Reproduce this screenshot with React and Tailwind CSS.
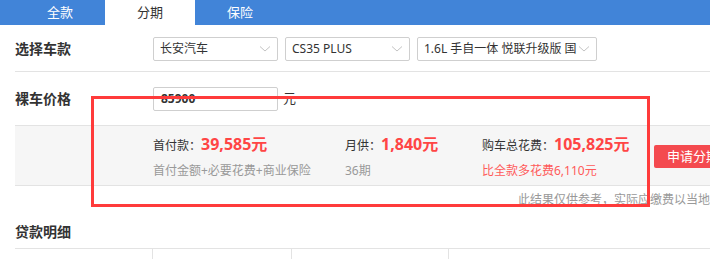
import React from "react";

const font = { fontFamily: '"Noto Sans", "Noto Sans CJK SC", sans-serif' };

function Chevron() {
  return (
    <svg width="12" height="8" viewBox="0 0 12 8" className="shrink-0">
      <path d="M1 1.5 L6 6 L11 1.5" fill="none" stroke="#c4c4c4" strokeWidth="1" />
    </svg>
  );
}

function Select({ w, text }) {
  return (
    <div
      className="h-[24px] border border-[#cfcfcf] rounded-[2px] bg-white flex items-center justify-between pl-[6px] pr-[6px] text-[12px] text-[#333] overflow-hidden whitespace-nowrap"
      style={{ width: w }}
    >
      <span className="overflow-hidden">{text}</span>
      <Chevron />
    </div>
  );
}

export default function App() {
  return (
    <div className="relative w-[710px] h-[259px] overflow-hidden bg-white" style={font}>
      {/* tabs */}
      <div className="h-[25px] bg-[#4184d8] flex pl-[15px]">
        <div className="w-[90px] flex items-center justify-center text-[13px] text-white">全款</div>
        <div className="w-[90px] flex items-center justify-center text-[13px] text-[#333] bg-white">分期</div>
        <div className="w-[90px] flex items-center justify-center text-[13px] text-white">保险</div>
      </div>

      <div className="pl-[15px] w-[900px]">
        {/* row 1 */}
        <div className="h-[47px] flex items-center border-b border-[#e3e3e3]">
          <div className="w-[138px] text-[14px] font-bold text-[#333]">选择车款</div>
          <div className="flex gap-[7px] mt-[1px]">
            <Select w="125px" text="长安汽车" />
            <Select w="125px" text="CS35 PLUS" />
            <Select w="180px" text="1.6L 手自一体 悦联升级版 国" />
          </div>
        </div>
        {/* row 2 */}
        <div className="h-[53px] flex items-center">
          <div className="w-[138px] text-[14px] font-bold text-[#333]">裸车价格</div>
          <div className="w-[125px] h-[24px] border border-[#cfcfcf] rounded-[2px] flex items-center pl-[7px] text-[12px] font-bold text-[#333]">
            85900
          </div>
          <div className="ml-[5px] text-[13px] text-[#333]">元</div>
        </div>
        {/* band */}
        <div className="h-[61px] bg-[#f6f6f6] border-y border-[#e3e3e3] flex items-center">
          <div className="w-[138px]" />
          <div className="w-[192px] flex flex-col gap-[6px]">
            <div className="flex items-baseline text-[12px] text-[#333]">
              首付款：<span className="text-[16px] font-bold text-[#ff4545]">39,585元</span>
            </div>
            <div className="text-[12px] text-[#999]">首付金额+必要花费+商业保险</div>
          </div>
          <div className="w-[137px] flex flex-col gap-[6px]">
            <div className="flex items-baseline text-[12px] text-[#333]">
              月供：<span className="text-[16px] font-bold text-[#ff4545]">1,840元</span>
            </div>
            <div className="text-[12px] text-[#999]">36期</div>
          </div>
          <div className="w-[172px] flex flex-col gap-[6px]">
            <div className="flex items-baseline text-[12px] text-[#333]">
              购车总花费：<span className="text-[16px] font-bold text-[#ff4545]">105,825元</span>
            </div>
            <div className="text-[12px] text-[#ff5a5a]">比全款多花费6,110元</div>
          </div>
          <div className="w-[90px] h-[23px] bg-[#f44a4f] rounded-[2px] text-white text-[13px] flex items-center pl-[13px] mt-[2px] whitespace-nowrap">
            申请分期
          </div>
        </div>
        {/* disclaimer */}
        <div className="h-[28px] flex items-center pl-[503px] text-[12px] text-[#999] whitespace-nowrap">
          此结果仅供参考，实际应缴费以当地为准
        </div>
        {/* loan detail */}
        <div className="h-[34px] flex items-center text-[14px] font-bold text-[#333]">贷款明细</div>
        <div className="border-t border-[#e3e3e3] h-[20px] flex">
          <div className="w-[138px] border-r border-[#e3e3e3]" />
          <div className="w-[139px] border-r border-[#e3e3e3]" />
          <div className="w-[157px] border-r border-[#e3e3e3]" />
        </div>
      </div>

      {/* red annotation box */}
      <div className="absolute left-[91px] top-[96px] w-[559px] h-[111px] border-[3px] border-[#ff3b3b] pointer-events-none" />
    </div>
  );
}
